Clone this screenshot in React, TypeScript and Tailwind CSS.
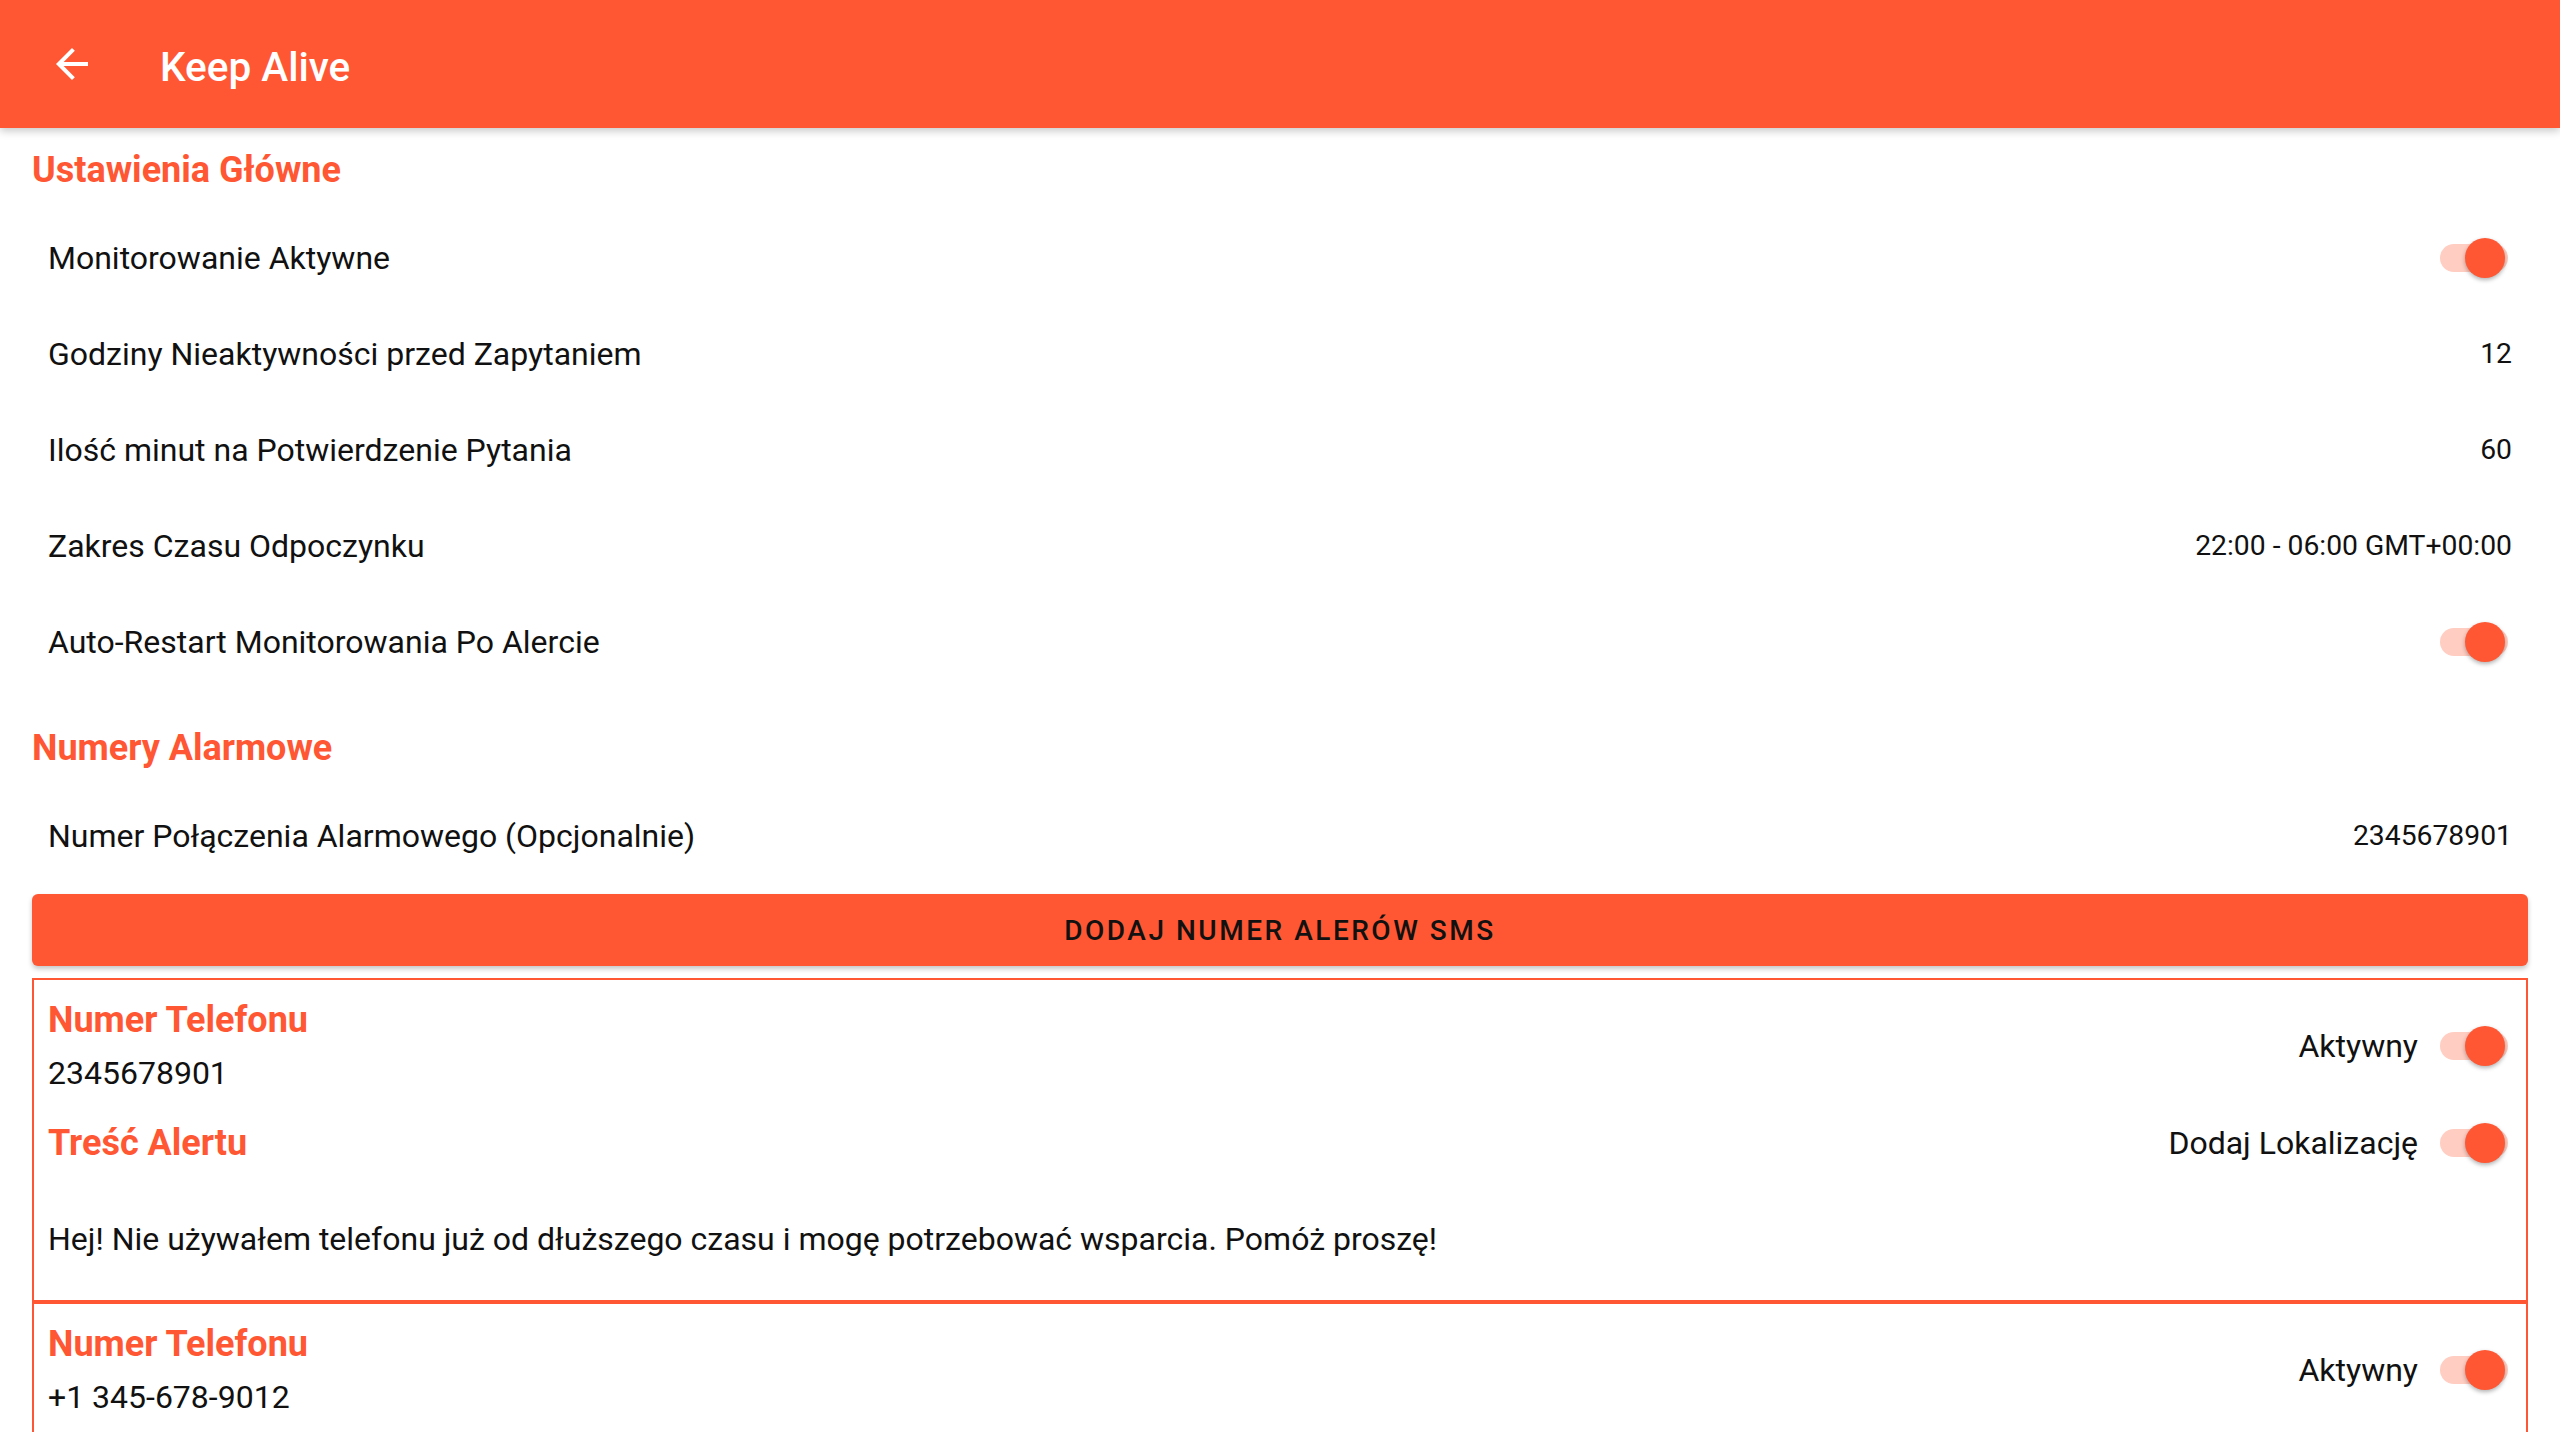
import React from "react";

function Toggle() {
  return (
    <div className="relative h-[40px] w-[72px] shrink-0">
      <div className="absolute left-0 top-[6px] h-[28px] w-[68px] rounded-full bg-[#ffcdc2]" />
      <div className="absolute left-[25px] top-0 h-[40px] w-[40px] rounded-full bg-[#ff5733] shadow-[0_2px_4px_rgba(0,0,0,0.3)]" />
    </div>
  );
}

function Row({ label, right }: { label: string; right: React.ReactNode }) {
  return (
    <div className="flex h-[96px] items-center justify-between px-[48px]">
      <span className="text-[32px] leading-[38px] text-[#111]">{label}</span>
      {right}
    </div>
  );
}

function Value({ v }: { v: string }) {
  return <span className="text-[28.3px] leading-[34px] text-[#111]">{v}</span>;
}

function SectionTitle({ title, className }: { title: string; className?: string }) {
  return (
    <div className={"flex h-[82px] items-center px-[32px] " + (className ?? "")}>
      <span className="mt-[2px] text-[36px] font-bold leading-[42px] text-[#ff5733]">{title}</span>
    </div>
  );
}

function SmsCard({ phone, extraClass, full }: { phone: string; extraClass?: string; full: boolean }) {
  return (
    <div className={"mx-[32px] border-2 border-[#ff5733] px-[14px] " + (extraClass ?? "")}>
      <div className="flex items-center justify-between pt-[19px]">
        <div className="flex flex-col">
          <span className="text-[36px] font-bold leading-[42px] text-[#ff5733]">Numer Telefonu</span>
          <span className="mt-[13px] text-[32px] leading-[38px] text-[#111]">{phone}</span>
        </div>
        <div className="flex items-center">
          <span className="mr-[22px] text-[32px] leading-[38px] text-[#111]">Aktywny</span>
          <Toggle />
        </div>
      </div>
      {full ? (
        <>
          <div className="flex h-[102px] items-center justify-between">
            <span className="text-[36px] font-bold leading-[42px] text-[#ff5733]">Treść Alertu</span>
            <div className="flex items-center">
              <span className="mr-[22px] text-[32px] leading-[38px] text-[#111]">Dodaj Lokalizację</span>
              <Toggle />
            </div>
          </div>
          <div className="mt-[26px] pb-[42px] text-[32px] leading-[38px] text-[#111]">
            Hej! Nie używałem telefonu już od dłuższego czasu i mogę potrzebować wsparcia. Pomóż proszę!
          </div>
        </>
      ) : (
        <div className="h-[200px]" />
      )}
    </div>
  );
}

export default function App() {
  return (
    <div className="h-[1432px] w-[2560px] overflow-hidden bg-white font-['Roboto',sans-serif]">
      <div className="relative z-10 flex h-[128px] items-center bg-[#ff5733] shadow-[0_3px_8px_rgba(0,0,0,0.22)]">
        <svg className="ml-[48px] h-[48px] w-[48px] shrink-0" viewBox="0 0 24 24" fill="white">
          <path d="M20 11H7.83l5.59-5.59L12 4l-8 8 8 8 1.41-1.41L7.83 13H20v-2z" />
        </svg>
        <span className="ml-[64px] mt-[6px] text-[40.5px] font-medium leading-[48px] text-white">Keep Alive</span>
      </div>

      <SectionTitle title="Ustawienia Główne" />
      <Row label="Monitorowanie Aktywne" right={<Toggle />} />
      <Row label="Godziny Nieaktywności przed Zapytaniem" right={<Value v="12" />} />
      <Row label="Ilość minut na Potwierdzenie Pytania" right={<Value v="60" />} />
      <Row label="Zakres Czasu Odpoczynku" right={<Value v="22:00 - 06:00 GMT+00:00" />} />
      <Row label="Auto-Restart Monitorowania Po Alercie" right={<Toggle />} />

      <SectionTitle title="Numery Alarmowe" className="mt-[16px]" />
      <Row label="Numer Połączenia Alarmowego (Opcjonalnie)" right={<Value v="2345678901" />} />

      <div className="mx-[32px] mt-[10px] flex h-[72px] items-center justify-center rounded-[6px] bg-[#ff5733] shadow-[0_3px_5px_rgba(0,0,0,0.22)]">
        <span className="mt-[2px] text-[28px] font-medium tracking-[0.09em] text-[#111]">DODAJ NUMER ALERÓW SMS</span>
      </div>

      <SmsCard phone="2345678901" extraClass="mt-[12px]" full={true} />
      <SmsCard phone="+1 345-678-9012" full={false} />
    </div>
  );
}
